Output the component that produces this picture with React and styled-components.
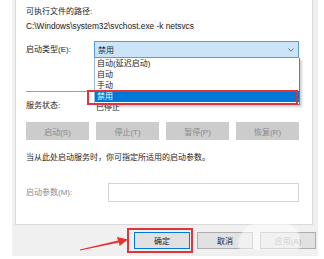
import React from 'react';
import styled, { createGlobalStyle } from 'styled-components';

const GlobalStyle = createGlobalStyle`
  html, body {
    margin: 0;
    padding: 0;
    background: #ffffff;
  }
  body {
    width: 324px;
    height: 259px;
    overflow: hidden;
    font-family: "Liberation Sans", "Noto Sans CJK SC", sans-serif;
    font-size: 8px;
    color: #1e1e1e;
  }
`;

const Page = styled.div`
  position: relative;
  width: 324px;
  height: 259px;
  background: #fff;
`;

const Dialog = styled.div`
  margin-left: 12px;
  width: 306px;
  height: 256px;
  background: #f0f0f0;
  display: flex;
  flex-direction: column;
`;

const Panel = styled.div`
  margin-left: 3px;
  width: 298px;
  height: 225px;
  box-sizing: border-box;
  background: #fff;
  border: 1px solid #dadada;
  border-top: none;
  padding: 6px 0 0 10px;
  display: flex;
  flex-direction: column;
`;

const Text = styled.div`
  line-height: 12px;
  height: 12px;
  white-space: nowrap;
  margin-top: ${p => p.$mt || 0}px;
  color: ${p => (p.$muted ? '#8c8c8c' : '#1e1e1e')};
`;

const PathText = styled(Text)`
  align-self: flex-start;
  background: #f8f8f8;
  padding-right: 6px;
  font-size: 8.3px;
`;

const FieldRow = styled.div`
  display: flex;
  align-items: center;
  margin-top: ${p => p.$mt || 0}px;
`;

const FieldLabel = styled.div`
  width: ${p => p.$w}px;
  flex: none;
  line-height: 12px;
  white-space: nowrap;
  color: ${p => (p.$muted ? '#8c8c8c' : '#1e1e1e')};
`;

const SelectWrap = styled.div`
  position: relative;
  width: 205px;
`;

const SelectBox = styled.div`
  height: 17px;
  box-sizing: border-box;
  background: #cce4f7;
  border: 1px solid #5b9bd5;
  display: flex;
  align-items: center;
  justify-content: space-between;
  padding: 0 4px 0 3px;
`;

const Chevron = styled.svg`
  width: 6px;
  height: 4px;
`;

const DropList = styled.ul`
  position: absolute;
  top: 17px;
  left: 0;
  width: 206px;
  box-sizing: border-box;
  margin: 0;
  padding: 0 0 2px;
  list-style: none;
  background: #fff;
  border: 1px solid #7a7a7a;
  border-top: none;
  border-left-color: #9bbce0;
  box-shadow: 2px 2px 2px rgba(0, 0, 0, 0.18);
  z-index: 2;
`;

const DropItem = styled.li`
  height: 11px;
  line-height: 11px;
  padding-left: 2px;
  background: ${p => (p.$active ? '#0078d7' : 'transparent')};
  color: ${p => (p.$active ? '#fff' : '#1e1e1e')};
`;

const Separator = styled.div`
  margin-top: 33px;
  margin-right: 14px;
  height: 1px;
  background: #a0a0a0;
`;

const ButtonRow = styled.div`
  display: grid;
  grid-template-columns: repeat(4, 63px);
  gap: 7px;
  margin-top: 10px;
`;

const GrayButton = styled.div`
  height: 18px;
  background: #cccccc;
  color: #8a8a8a;
  display: flex;
  align-items: center;
  justify-content: center;
`;

const TextInput = styled.div`
  width: 191px;
  height: 19px;
  box-sizing: border-box;
  border: 1px solid #d4d4d4;
  background: #fff;
`;

const Footer = styled.div`
  display: flex;
  gap: 7px;
  padding: 7px 0 0 122px;
`;

const FooterButton = styled.div`
  width: 56px;
  height: 17px;
  box-sizing: border-box;
  background: #e1e1e1;
  border: 1px solid ${p => (p.$primary ? '#0078d7' : '#adadad')};
  display: flex;
  align-items: center;
  justify-content: center;
  color: ${p => (p.$faded ? '#9a9a9a' : '#1e1e1e')};
`;

const Highlight = styled.div`
  position: absolute;
  left: ${p => p.$x}px;
  top: ${p => p.$y}px;
  width: ${p => p.$w}px;
  height: ${p => p.$h}px;
  box-sizing: border-box;
  border: 2px solid #e0343c;
  z-index: 3;
`;

const Overlay = styled.svg`
  position: absolute;
  left: 0;
  top: 0;
  z-index: 4;
  pointer-events: none;
`;

const Watermark = styled.div`
  position: absolute;
  left: 238px;
  top: 222px;
  width: 62px;
  height: 28px;
  border-radius: 30px 24px 4px 6px;
  background: rgba(255, 255, 255, 0.55);
  filter: blur(1px);
  z-index: 4;
`;

export default function App() {
  return (
    <Page>
      <GlobalStyle />
      <Dialog>
        <Panel>
          <Text>可执行文件的路径:</Text>
          <PathText $mt={2}>C:\Windows\system32\svchost.exe -k netsvcs</PathText>

          <FieldRow $mt={9}>
            <FieldLabel $w={68}>启动类型(E):</FieldLabel>
            <SelectWrap>
              <SelectBox>
                <span>禁用</span>
                <Chevron viewBox="0 0 6 4">
                  <path d="M0.5 0.5 L3 3.2 L5.5 0.5" fill="none" stroke="#555" strokeWidth="0.8" />
                </Chevron>
              </SelectBox>
              <DropList>
                <DropItem>自动(延迟启动)</DropItem>
                <DropItem>自动</DropItem>
                <DropItem>手动</DropItem>
                <DropItem $active>禁用</DropItem>
              </DropList>
            </SelectWrap>
          </FieldRow>

          <Separator />

          <FieldRow $mt={8}>
            <FieldLabel $w={70}>服务状态:</FieldLabel>
            <span>已停止</span>
          </FieldRow>

          <ButtonRow>
            <GrayButton>启动(S)</GrayButton>
            <GrayButton>停止(T)</GrayButton>
            <GrayButton>暂停(P)</GrayButton>
            <GrayButton>恢复(R)</GrayButton>
          </ButtonRow>

          <Text $mt={12}>当从此处启动服务时，你可指定所适用的启动参数。</Text>

          <FieldRow $mt={19}>
            <FieldLabel $w={82} $muted>启动参数(M):</FieldLabel>
            <TextInput />
          </FieldRow>
        </Panel>

        <Footer>
          <FooterButton $primary>确定</FooterButton>
          <FooterButton>取消</FooterButton>
          <FooterButton $faded>应用(A)</FooterButton>
        </Footer>
      </Dialog>

      <Highlight $x={87} $y={90} $w={211} $h={15} />
      <Highlight $x={127} $y={228} $w={66} $h={25} />
      <Watermark />

      <Overlay width="324" height="259" viewBox="0 0 324 259">
        <polygon points="80,249.5 118,240.5 117,237 128,239.5 119.5,246 119,242.5 80,250.5" fill="#e8302c" />
      </Overlay>
    </Page>
  );
}
